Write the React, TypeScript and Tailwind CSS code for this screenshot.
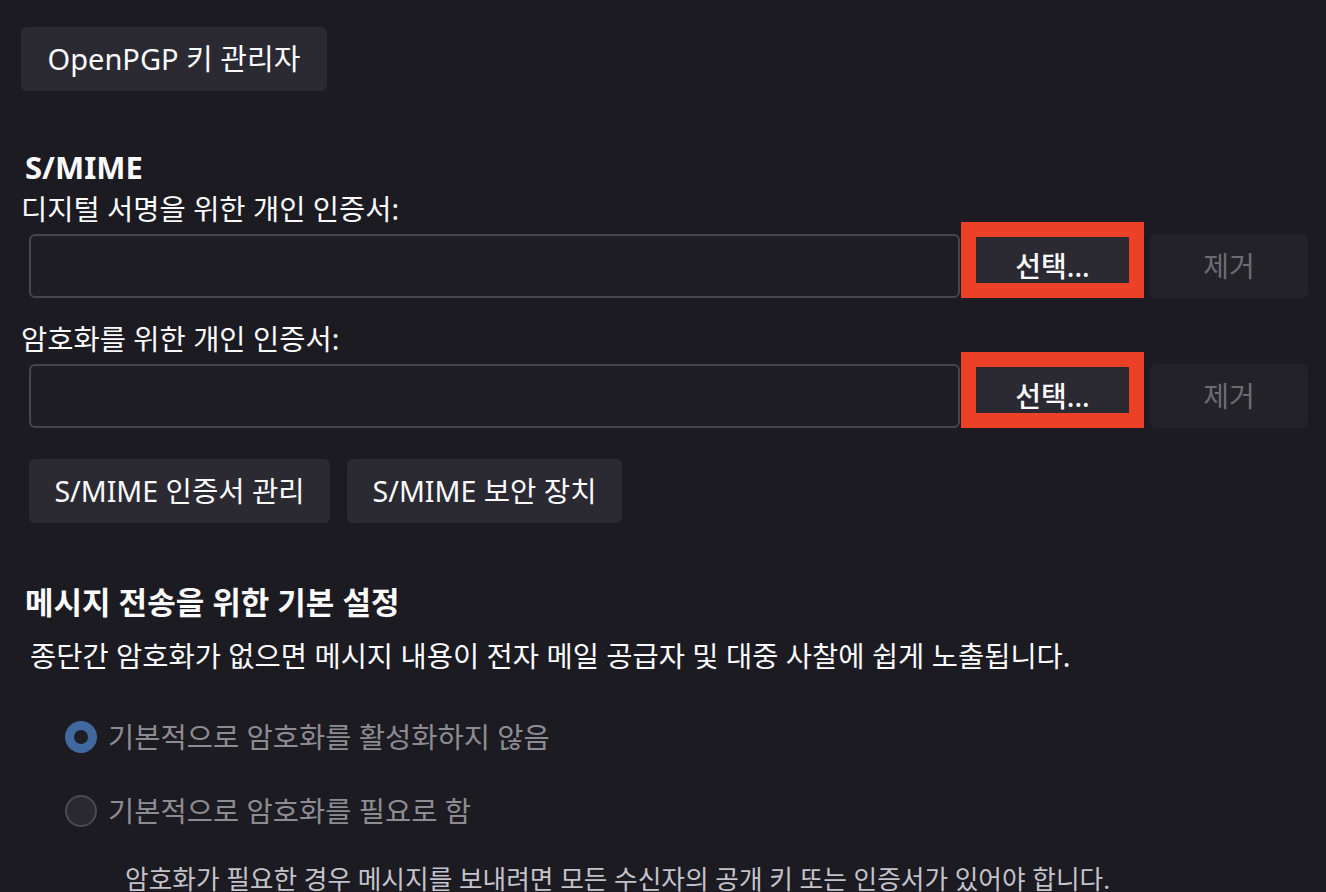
export default function App() {
    return (
        <div className="min-h-screen bg-[#1c1b22] text-[#fbfbfe] pl-[21px] pr-[18px] pt-[27px] pb-4 font-['Noto_Sans','Noto_Sans_CJK_KR',sans-serif] text-[28.5px] leading-[32px] overflow-hidden">
            <button className="h-[64px] w-[306px] rounded-[6px] bg-[#2b2a33] text-[29px] text-[#fbfbfe]">
                OpenPGP 키 관리자
            </button>

            <h2 className="mt-[58px] ml-[4px] text-[31px] leading-[36px] font-bold">S/MIME</h2>

            <div className="mt-[8px]">디지털 서명을 위한 개인 인증서:</div>
            <CertRow />

            <div className="mt-[25px]">암호화를 위한 개인 인증서:</div>
            <CertRow />

            <div className="mt-[31px] ml-[8px] flex gap-[17px] text-[28.6px]">
                <button className="h-[64px] w-[301px] rounded-[6px] bg-[#2b2a33]">S/MIME 인증서 관리</button>
                <button className="h-[64px] w-[275px] rounded-[6px] bg-[#2b2a33]">S/MIME 보안 장치</button>
            </div>

            <h2 className="mt-[61px] ml-[4px] text-[31px] leading-[36px] font-bold">메시지 전송을 위한 기본 설정</h2>
            <p className="mt-[20px] ml-[9px]">
                종단간 암호화가 없으면 메시지 내용이 전자 메일 공급자 및 대중 사찰에 쉽게 노출됩니다.
            </p>

            <div className="mt-[45px] ml-[44px] flex h-[40px] items-center gap-[11px] text-[#8d8c93]">
                <span className="flex h-[32px] w-[32px] shrink-0 items-center justify-center rounded-full bg-[#41689f]">
                    <span className="h-[14px] w-[14px] rounded-full bg-[#1f1e25]"></span>
                </span>
                <span>기본적으로 암호화를 활성화하지 않음</span>
            </div>
            <div className="mt-[34px] ml-[44px] flex h-[40px] items-center gap-[11px] text-[#8d8c93]">
                <span className="h-[32px] w-[32px] shrink-0 rounded-full border-2 border-[#4b4a51] bg-[#2a2930]"></span>
                <span>기본적으로 암호화를 필요로 함</span>
            </div>

            <p className="mt-[33px] ml-[104px] text-[25.7px] text-[#c4c3cb]">
                암호화가 필요한 경우 메시지를 보내려면 모든 수신자의 공개 키 또는 인증서가 있어야 합니다.
            </p>
        </div>
    )
}

function CertRow() {
    return (
        <div className="mt-[9px] ml-[8px] flex h-[64px]">
            <div className="flex-1 rounded-[6px] border-2 border-[#46454c] bg-[#1f1e25]"></div>
            <div className="relative ml-[6px] w-[173px]">
                <button className="h-full w-full rounded-[6px] bg-[#2b2a33] text-[28px] font-medium">선택...</button>
                {/* annotation box drawn over the button */}
                <div className="pointer-events-none absolute left-[-5px] top-[-12px] h-[76px] w-[183px] border-[15px] border-[#ec4027]"></div>
            </div>
            <button className="ml-[11px] w-[158px] rounded-[6px] bg-[#232229] text-[28px] text-[#6c6b72]">제거</button>
        </div>
    )
}
